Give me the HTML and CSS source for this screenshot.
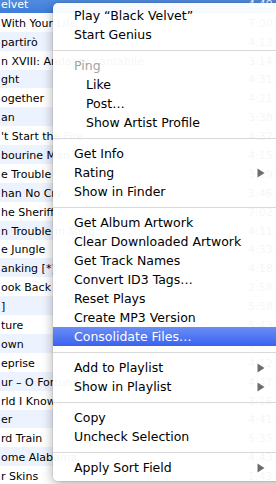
FILE: index.html
```html
<!DOCTYPE html>
<html>
<head>
<meta charset="utf-8">
<link rel="stylesheet" href="styles.css">
</head>
<body>
<div class="list">
  <div class="row sel"><span class="name">elvet</span><span class="time">4:49</span></div>
  <div class="row"><span class="name">With Your Life</span><span class="time">7:00</span></div>
  <div class="row alt"><span class="name">partirò</span><span class="time">4:13</span></div>
  <div class="row"><span class="name">n XVIII: Andante cantabile</span><span class="time">3:14</span></div>
  <div class="row alt"><span class="name">ght</span><span class="time">4:31</span></div>
  <div class="row"><span class="name">ogether</span><span class="time">4:21</span></div>
  <div class="row alt"><span class="name">an</span><span class="time">3:38</span></div>
  <div class="row"><span class="name">'t Start the Fire</span><span class="time">4:37</span></div>
  <div class="row alt"><span class="name">bourine Man</span><span class="time">4:15</span></div>
  <div class="row"><span class="name">e Trouble</span><span class="time">3:29</span></div>
  <div class="row alt"><span class="name">han No Cry</span><span class="time">3:46</span></div>
  <div class="row"><span class="name">he Sheriff</span><span class="time">7:02</span></div>
  <div class="row alt"><span class="name">n Trouble in Mind</span><span class="time">4:11</span></div>
  <div class="row"><span class="name">e Jungle</span><span class="time">4:33</span></div>
  <div class="row alt"><span class="name">anking [*]</span><span class="time">4:18</span></div>
  <div class="row"><span class="name">ook Back</span><span class="time">2:58</span></div>
  <div class="row alt"><span class="name">]</span><span class="time">5:58</span></div>
  <div class="row"><span class="name">ture</span><span class="time">5:43</span></div>
  <div class="row alt"><span class="name">own</span><span class="time">3:05</span></div>
  <div class="row"><span class="name">eprise</span><span class="time">4:12</span></div>
  <div class="row alt"><span class="name">ur – O Fortuna</span><span class="time">4:47</span></div>
  <div class="row"><span class="name">rld I Know</span><span class="time">3:16</span></div>
  <div class="row alt"><span class="name">er</span><span class="time">4:41</span></div>
  <div class="row"><span class="name">rd Train</span><span class="time">5:35</span></div>
  <div class="row alt"><span class="name">ome Alabama</span><span class="time">4:43</span></div>
  <div class="row"><span class="name">r Skins</span><span class="time">1:43</span></div>
</div>

<div class="menu">
  <div class="item">Play “Black Velvet”</div>
  <div class="item">Start Genius</div>
  <div class="sep"></div>
  <div class="item dim">Ping</div>
  <div class="item sub">Like</div>
  <div class="item sub">Post…</div>
  <div class="item sub">Show Artist Profile</div>
  <div class="sep"></div>
  <div class="item">Get Info</div>
  <div class="item">Rating<svg class="arrow" width="8" height="10" viewBox="0 0 8 10"><path d="M0.5 0.5 L7.5 5 L0.5 9.5 Z"/></svg></div>
  <div class="item">Show in Finder</div>
  <div class="sep"></div>
  <div class="item">Get Album Artwork</div>
  <div class="item">Clear Downloaded Artwork</div>
  <div class="item">Get Track Names</div>
  <div class="item">Convert ID3 Tags…</div>
  <div class="item">Reset Plays</div>
  <div class="item">Create MP3 Version</div>
  <div class="item hl">Consolidate Files…</div>
  <div class="sep"></div>
  <div class="item">Add to Playlist<svg class="arrow" width="8" height="10" viewBox="0 0 8 10"><path d="M0.5 0.5 L7.5 5 L0.5 9.5 Z"/></svg></div>
  <div class="item">Show in Playlist<svg class="arrow" width="8" height="10" viewBox="0 0 8 10"><path d="M0.5 0.5 L7.5 5 L0.5 9.5 Z"/></svg></div>
  <div class="sep"></div>
  <div class="item">Copy</div>
  <div class="item">Uncheck Selection</div>
  <div class="sep"></div>
  <div class="item">Apply Sort Field<svg class="arrow" width="8" height="10" viewBox="0 0 8 10"><path d="M0.5 0.5 L7.5 5 L0.5 9.5 Z"/></svg></div>
</div>
</body>
</html>
```

FILE: styles.css
```css
html, body {
  margin: 0;
  padding: 0;
  width: 276px;
  height: 484px;
  overflow: hidden;
  background: #ffffff;
  font-family: "DejaVu Sans", "Noto Sans", sans-serif;
}

.list {
  margin-top: -6px;
  display: flex;
  flex-direction: column;
}

.row {
  height: 18.9px;
  display: flex;
  align-items: flex-end;
  justify-content: space-between;
  padding: 0 4px 0 1px;
  box-sizing: border-box;
  font-size: 11px;
  line-height: 14px;
  color: #000;
  background: #ffffff;
  white-space: nowrap;
}

.row .name {
  padding-bottom: 1px;
}

.row .time {
  width: 24px;
  padding-bottom: 1px;
}

.row.alt {
  background: #edf3fe;
}

.row.sel {
  background: linear-gradient(#5a92e2, #3d7edb);
  color: #fff;
}

.menu {
  position: absolute;
  left: 53px;
  top: 3px;
  width: 232px;
  padding: 3px 0 4px 0;
  background: rgba(255, 255, 255, 0.96);
  border-radius: 5px;
  box-shadow: 0 3px 12px rgba(0, 0, 0, 0.33), 0 0 0 1px rgba(0, 0, 0, 0.05);
  display: flex;
  flex-direction: column;
  font-size: 12.5px;
  color: #000;
}

.item {
  height: 19px;
  line-height: 19px;
  padding-left: 21px;
  position: relative;
  white-space: nowrap;
}

.item.sub {
  padding-left: 33px;
}

.item.dim {
  color: #a3a3a3;
}

.item.hl {
  background: linear-gradient(#6a8ef6, #3b62ef);
  color: #fff;
}

.arrow {
  position: absolute;
  left: 204px;
  top: 5px;
  fill: #6c6c6c;
}

.sep {
  height: 12px;
  display: flex;
  align-items: center;
}

.sep::before {
  content: "";
  flex: 1;
  height: 1px;
  background: #d9d9d9;
}
```
